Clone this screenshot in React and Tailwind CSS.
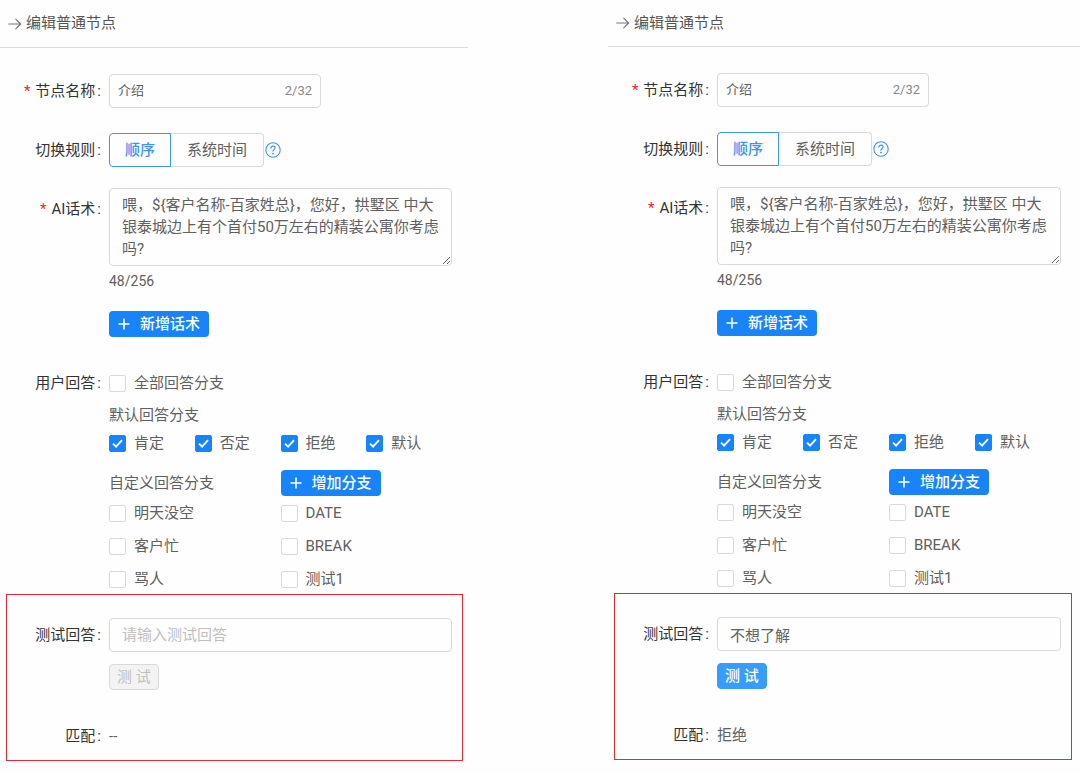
import { useState } from 'react';

const SPEECH = '喂，${客户名称-百家姓总}，您好，拱墅区 中大银泰城边上有个首付50万左右的精装公寓你考虑吗?';

const DEFAULT_BRANCHES = ['肯定', '否定', '拒绝', '默认'];
const CUSTOM_BRANCHES = ['明天没空', 'DATE', '客户忙', 'BREAK', '骂人', '测试1'];

// Respuestas de prueba -> rama que coincide
const MATCHES = { '不想了解': '拒绝', '好的': '肯定', '不是': '否定' };

function ArrowIcon() {
    return (
        <svg className="w-[14px] h-[14px] text-[#777]" viewBox="0 0 14 14" fill="none" stroke="currentColor" strokeWidth="1.2" strokeLinecap="round" strokeLinejoin="round">
            <path d="M0.8 7h12M7.8 2.2 12.6 7l-4.8 4.8" />
        </svg>
    );
}

function PlusIcon() {
    return (
        <svg className="w-3 h-3" viewBox="0 0 12 12" fill="none" stroke="currentColor" strokeWidth="1.6">
            <path d="M6 0.5v11M0.5 6h11" />
        </svg>
    );
}

function HelpIcon() {
    return (
        <svg className="w-4 h-4" viewBox="0 0 16 16" fill="none" stroke="currentColor" strokeWidth="1.1" strokeLinecap="round">
            <circle cx="8" cy="8" r="7.2" />
            <path d="M5.9 6.2c0-1.3.9-2.1 2.1-2.1s2.1.8 2.1 1.9c0 1.5-2.1 1.6-2.1 3.2" />
            <circle cx="8" cy="11.6" r="0.4" fill="currentColor" />
        </svg>
    );
}

function Label({ htmlFor, required, children }) {
    return (
        <label htmlFor={htmlFor} className="flex justify-end pr-2 text-[#333]">
            {required && <span className="mr-[5px] text-[#f5222d]">*</span>}
            <span>{children}</span>
            <span className="ml-0.5">:</span>
        </label>
    );
}

function Check({ label, checked, onChange }) {
    return (
        <label className="flex items-center gap-2 leading-[22px] cursor-pointer">
            <span className="grid place-items-center">
                <input
                    type="checkbox"
                    checked={checked}
                    onChange={onChange}
                    className="peer col-start-1 row-start-1 appearance-none w-[17px] h-[17px] rounded-xs border border-[#d9d9d9] bg-white checked:border-[#1784fc] checked:bg-[#1784fc]"
                />
                <svg className="col-start-1 row-start-1 w-[11px] h-[11px] text-white opacity-0 peer-checked:opacity-100 pointer-events-none" viewBox="0 0 11 11" fill="none" stroke="currentColor" strokeWidth="1.9">
                    <path d="M1 5.6 4.1 8.6 10 2.2" />
                </svg>
            </span>
            <span>{label}</span>
        </label>
    );
}

function PrimaryButton({ children }) {
    return (
        <button type="button" className="flex items-center gap-[10px] h-[26px] px-[9px] rounded bg-[#1784fc] text-white font-medium cursor-pointer">
            <PlusIcon />
            {children}
        </button>
    );
}

function NodePanel({ id, initialAnswer, initialResult, headerClass, bodyClass }) {
    const [name, setName] = useState('介绍');
    const [rule, setRule] = useState('顺序');
    const [speech, setSpeech] = useState(SPEECH);
    const [selected, setSelected] = useState(DEFAULT_BRANCHES);
    const [answer, setAnswer] = useState(initialAnswer);
    const [result, setResult] = useState(initialResult);

    const all = [...DEFAULT_BRANCHES, ...CUSTOM_BRANCHES];

    const toggle = (b) => {
        setSelected(selected.includes(b) ? selected.filter(x => x !== b) : [...selected, b]);
    };

    return (
        <section>
            <header className={`flex items-center gap-1 pl-2 border-b border-[#dcdcdc] text-[#555] ${headerClass}`}>
                <ArrowIcon />
                <h1>编辑普通节点</h1>
            </header>

            <form className={`pt-[26px] ${bodyClass}`} onSubmit={(e) => e.preventDefault()}>
                <div className="grid grid-cols-[109px_1fr] pr-4">
                    {/* Nombre del nodo */}
                    <div className="leading-[34px]">
                        <Label htmlFor={`${id}-name`} required>节点名称</Label>
                    </div>
                    <div className="flex items-center w-[212px] h-[34px] px-2 rounded border border-[#d9d9d9] text-[13px]">
                        <input
                            id={`${id}-name`}
                            className="flex-1 min-w-0 outline-none"
                            maxLength={32}
                            value={name}
                            onChange={(e) => setName(e.target.value)}
                        />
                        <span className="text-[#888]">{name.length}/32</span>
                    </div>

                    {/* Regla de cambio */}
                    <div className="mt-[25px] leading-[34px]">
                        <Label>切换规则</Label>
                    </div>
                    <div className="mt-[25px] flex items-center">
                        <div role="radiogroup" aria-label="切换规则" className="flex h-[34px]">
                            <label className="flex items-center px-[15px] rounded-l border border-[#d9d9d9] has-checked:border-[#3d94f6] has-checked:text-[#3d94f6] has-checked:font-medium cursor-pointer">
                                <input type="radio" name={`${id}-rule`} className="sr-only" checked={rule === '顺序'} onChange={() => setRule('顺序')} />
                                顺序
                            </label>
                            <label className="flex items-center px-4 rounded-r border border-l-0 border-[#d9d9d9] has-checked:border-[#3d94f6] has-checked:text-[#3d94f6] has-checked:font-medium cursor-pointer">
                                <input type="radio" name={`${id}-rule`} className="sr-only" checked={rule === '系统时间'} onChange={() => setRule('系统时间')} />
                                系统时间
                            </label>
                        </div>
                        <button type="button" aria-label="帮助" className="ml-px text-[#3d94f6]">
                            <HelpIcon />
                        </button>
                    </div>

                    {/* Texto de la IA */}
                    <div className="mt-[21px] pt-1 leading-[34px]">
                        <Label htmlFor={`${id}-speech`} required>AI话术</Label>
                    </div>
                    <div className="mt-[21px]">
                        <textarea
                            id={`${id}-speech`}
                            rows={3}
                            maxLength={256}
                            className="block w-full pl-3 pr-1 py-[5px] rounded border border-[#d9d9d9] leading-[22px] resize-y overflow-hidden outline-none"
                            value={speech}
                            onChange={(e) => setSpeech(e.target.value)}
                        />
                        <p className="mt-1 text-sm leading-[22px]">{speech.length}/256</p>
                        <div className="mt-[19px] flex">
                            <PrimaryButton>新增话术</PrimaryButton>
                        </div>
                    </div>

                    {/* Ramas de respuesta */}
                    <div className="mt-[35px] leading-[22px]">
                        <Label>用户回答</Label>
                    </div>
                    <div className="mt-[35px] leading-[22px]">
                        <Check
                            label="全部回答分支"
                            checked={selected.length === all.length}
                            onChange={(e) => setSelected(e.target.checked ? all : [])}
                        />
                        <p className="mt-[10px]">默认回答分支</p>
                        <div className="mt-[6px] grid grid-cols-4">
                            {DEFAULT_BRANCHES.map(b => (
                                <Check key={b} label={b} checked={selected.includes(b)} onChange={() => toggle(b)} />
                            ))}
                        </div>
                        <div className="mt-4 grid grid-cols-2 items-center">
                            <p>自定义回答分支</p>
                            <div className="flex">
                                <PrimaryButton>增加分支</PrimaryButton>
                            </div>
                        </div>
                        <div className="mt-[6px] grid grid-cols-2 gap-y-[11px]">
                            {CUSTOM_BRANCHES.map(b => (
                                <Check key={b} label={b} checked={selected.includes(b)} onChange={() => toggle(b)} />
                            ))}
                        </div>
                    </div>
                </div>

                {/* Zona de prueba */}
                <div className="mt-1 ml-[6px] mr-[5px] grid grid-cols-[102px_1fr] pt-[23px] pb-[13px] pr-[10px] border border-[#e02c34]">
                    <div className="leading-[34px]">
                        <Label htmlFor={`${id}-answer`}>测试回答</Label>
                    </div>
                    <div>
                        <input
                            id={`${id}-answer`}
                            className="block w-full h-[34px] px-3 rounded border border-[#d9d9d9] placeholder:text-[#bfbfbf] outline-none"
                            placeholder="请输入测试回答"
                            value={answer}
                            onChange={(e) => setAnswer(e.target.value)}
                        />
                        <button
                            type="button"
                            disabled={!answer.trim()}
                            onClick={() => setResult(MATCHES[answer.trim()] || '默认')}
                            className="mt-3 block h-[26px] px-[7px] rounded border border-[#389cfa] bg-[#389cfa] leading-6 text-white font-medium disabled:border-[#d9d9d9] disabled:bg-[#f3f3f3] disabled:text-[#bfbfbf] disabled:font-normal"
                        >
                            测 试
                        </button>
                    </div>
                    <div className="mt-[35px] leading-[22px]">
                        <Label>匹配</Label>
                    </div>
                    <p className="mt-[35px] leading-[22px]">{result}</p>
                </div>
            </form>
        </section>
    );
}

export default function App() {
    return (
        <main className="min-h-screen grid grid-cols-[468fr_140fr_472fr] bg-[#fefefe] font-[Roboto,'Noto_Sans_CJK_SC',sans-serif] text-[15px] text-[#606060]">
            <NodePanel id="before" initialAnswer="" initialResult="--" headerClass="h-12" bodyClass="" />
            <div />
            <NodePanel id="after" initialAnswer="不想了解" initialResult="拒绝" headerClass="h-[47px]" bodyClass="pr-[3px]" />
        </main>
    );
}
